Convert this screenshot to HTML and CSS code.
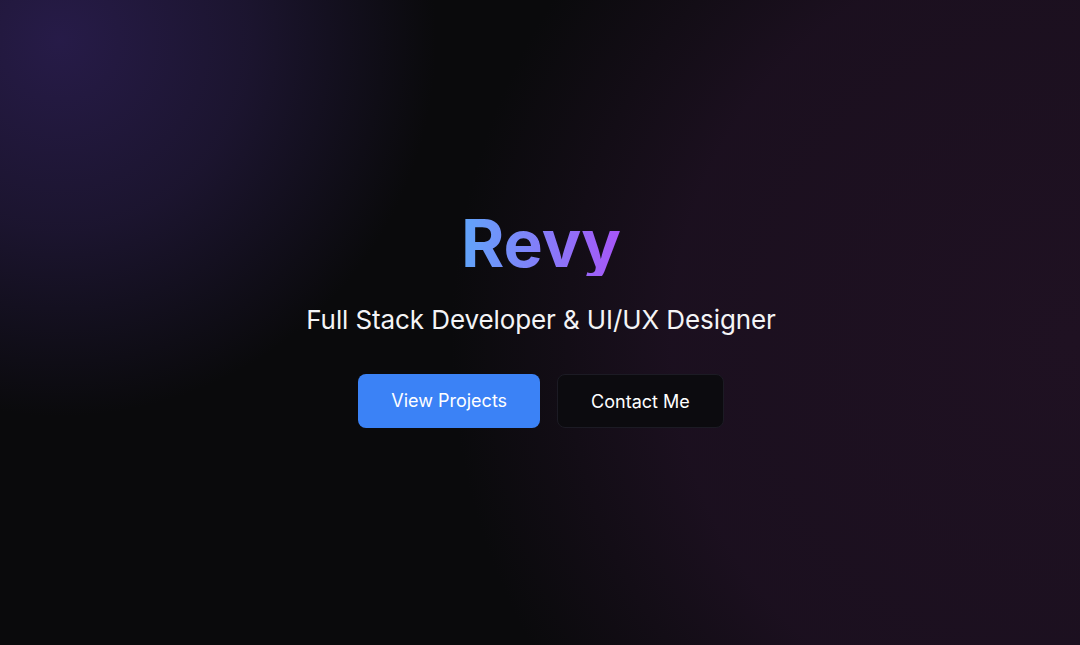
FILE: index.html
```html
<!DOCTYPE html>
<html lang="en">
<head>
<meta charset="utf-8">
<title>Revy</title>
<link rel="stylesheet" href="styles.css">
</head>
<body>
<main class="hero">
  <div class="glow glow-left"></div>
  <div class="glow glow-right"></div>
  <div class="content">
    <h1 class="title">Revy</h1>
    <p class="subtitle">Full Stack Developer &amp; UI/UX Designer</p>
    <div class="actions">
      <a class="btn btn-primary" href="#projects">View Projects</a>
      <a class="btn btn-outline" href="#contact">Contact Me</a>
    </div>
  </div>
</main>
</body>
</html>
```
FILE: styles.css
```css
* { box-sizing: border-box; }
html, body { margin: 0; padding: 0; }
body {
  background: #0a0a0c;
  color: #fff;
  font-family: Inter, "Noto Sans", sans-serif;
  overflow: hidden;
}
.hero {
  position: relative;
  height: 645px;
  display: flex;
  align-items: center;
  justify-content: center;
  overflow: hidden;
}
.glow {
  position: absolute;
  border-radius: 50%;
  pointer-events: none;
}
.glow-left {
  left: -320px;
  top: -340px;
  width: 760px;
  height: 760px;
  background: radial-gradient(circle, rgba(40,28,75,0.95) 0%, rgba(35,25,62,0.7) 35%, rgba(10,10,12,0) 70%);
}
.glow-right {
  right: -640px;
  top: -260px;
  width: 1300px;
  height: 1200px;
  background: radial-gradient(circle, rgba(31,17,34,1) 0%, rgba(28,16,32,0.95) 45%, rgba(10,10,12,0) 70%);
}
.content {
  position: relative;
  display: flex;
  flex-direction: column;
  align-items: center;
  margin-top: -7px;
  margin-left: 2px;
}
.title {
  margin: 0;
  font-size: 66px;
  line-height: 66px;
  font-weight: 700;
  background: linear-gradient(90deg, #60a5fa, #a855f7);
  -webkit-background-clip: text;
  background-clip: text;
  color: transparent;
}
.subtitle {
  margin: 28px 0 0;
  font-size: 26px;
  line-height: 32px;
  letter-spacing: -0.1px;
  color: #f4f4f6;
}
.actions {
  margin-top: 38px;
  display: flex;
  gap: 17px;
}
.btn {
  display: inline-flex;
  align-items: center;
  justify-content: center;
  height: 54px;
  padding: 0 33px;
  border-radius: 8px;
  font-size: 18px;
  text-decoration: none;
  color: #fff;
}
.btn-primary {
  background: #3b82f6;
  padding-bottom: 2px;
}
.btn-outline {
  background: #0c0b0f;
  border: 1px solid #1c1b24;
}
```
